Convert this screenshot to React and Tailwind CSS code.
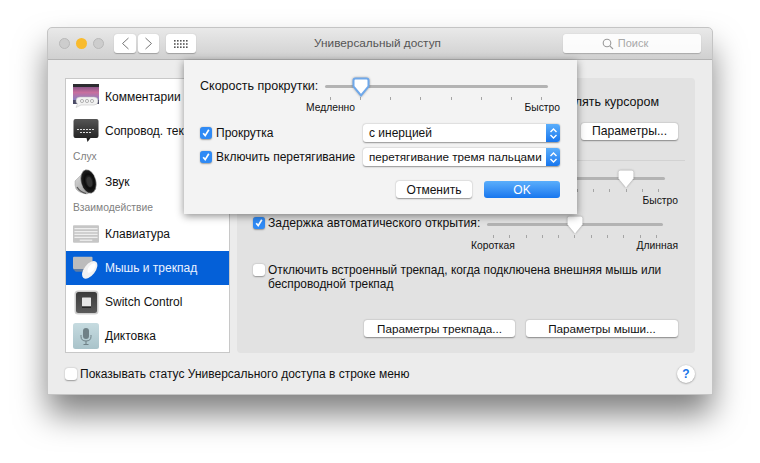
import React from "react";

const Check = ({ on }) => (
  <span className={"inline-flex shrink-0 w-3 h-3 rounded-[3px] items-center justify-center shadow-[0_0.5px_1.5px_rgba(0,0,0,0.35)] " + (on ? "bg-[#2f8af5]" : "bg-white")}>
    {on && (
      <svg width="10" height="10" viewBox="0 0 10 10" fill="none" stroke="white" strokeWidth="1.7">
        <path d="M2.2 5.2 L4.2 7.6 L7.8 1.8" />
      </svg>
    )}
  </span>
);

const Btn = ({ className = "", children }) => (
  <div className={"flex items-center justify-center h-[17px] rounded-[3px] bg-white shadow-[0_0.5px_1.5px_rgba(0,0,0,0.4)] text-[#111] " + className}>{children}</div>
);

const Thumb = ({ blue }) => (
  <svg width="18" height="20" viewBox="0 0 18 20" className="drop-shadow-[0_0.5px_1px_rgba(0,0,0,0.35)]">
    <path d="M3.5 1.5 H14.5 Q16.5 1.5 16.5 3.5 V9.5 L9 18.5 L1.5 9.5 V3.5 Q1.5 1.5 3.5 1.5 Z" fill="white" stroke={blue ? "#6fa8ea" : "none"} strokeWidth={blue ? 2 : 0} />
  </svg>
);

const Ticks = ({ n, className = "" }) => (
  <div className={"absolute top-[20px] flex justify-between " + className}>
    {Array.from({ length: n }).map((_, i) => (
      <span key={i} className="w-px h-[3px] bg-[#a5a5a5]" />
    ))}
  </div>
);

const Slider = ({ className, thumbClass, blue, ticks, tickClass }) => (
  <div className={"relative h-[30px] " + className}>
    <div className="absolute left-0 right-0 top-[8px] h-[3px] rounded-full bg-[#b3b3b3]" />
    <Ticks n={ticks} className={tickClass} />
    <div className={"absolute top-0 " + thumbClass}><Thumb blue={blue} /></div>
  </div>
);

const IconComments = () => (
  <svg width="26" height="26" viewBox="0 0 26 26">
    <defs>
      <linearGradient id="cg" x1="0" y1="0" x2="0" y2="1">
        <stop offset="0" stopColor="#6e4a7e" /><stop offset="0.5" stopColor="#c86f9e" /><stop offset="1" stopColor="#7e83c8" />
      </linearGradient>
    </defs>
    <rect x="0" y="0" width="26" height="17" fill="url(#cg)" />
    <rect x="0" y="0" width="26" height="3" fill="#2c2c30" />
    <rect x="0" y="16" width="26" height="4" fill="#4a4a66" />
    <path d="M7 13 H21 Q25 13 25 17 Q25 21 21 21 H8 L3 23.5 L4.5 20 Q3 19 3 17 Q3 13 7 13 Z" fill="#f2f2f2" stroke="#bbb" strokeWidth="0.5" />
    <circle cx="9" cy="17" r="1.6" fill="none" stroke="#999" strokeWidth="0.7" />
    <circle cx="14" cy="17" r="1.6" fill="none" stroke="#999" strokeWidth="0.7" />
    <circle cx="19" cy="17" r="1.6" fill="none" stroke="#999" strokeWidth="0.7" />
  </svg>
);

const IconCaption = () => (
  <svg width="26" height="26" viewBox="0 0 26 26">
    <defs>
      <linearGradient id="sg" x1="0" y1="0" x2="0" y2="1">
        <stop offset="0" stopColor="#555" /><stop offset="1" stopColor="#1b1b1b" />
      </linearGradient>
    </defs>
    <path d="M2.5 1 H23.5 Q25.5 1 25.5 3 V18 Q25.5 20 23.5 20 H17.5 L14.5 24 L13.5 20 H2.5 Q0.5 20 0.5 18 V3 Q0.5 1 2.5 1 Z" fill="url(#sg)" />
    <path d="M4 11.5 H22 M7 14.5 H19" stroke="#ddd" strokeWidth="1" strokeDasharray="2 1" />
  </svg>
);

const IconSound = () => (
  <svg width="24" height="26" viewBox="0 0 24 26">
    <defs>
      <radialGradient id="spk" cx="0.55" cy="0.5" r="0.6">
        <stop offset="0" stopColor="#4a4a4a" /><stop offset="0.5" stopColor="#0c0c0c" /><stop offset="1" stopColor="#2a2a2a" />
      </radialGradient>
      <linearGradient id="spb" x1="0" y1="0" x2="1" y2="1">
        <stop offset="0" stopColor="#e4e4e4" /><stop offset="1" stopColor="#8c8c8c" />
      </linearGradient>
    </defs>
    <path d="M1 12 L12 1 L22 20 L13 25 Q5 24 2 20 Q0.5 16 1 12 Z" fill="url(#spb)" stroke="#8a8a8a" strokeWidth="0.4" />
    <ellipse cx="14.5" cy="12.5" rx="7.5" ry="12" transform="rotate(-14 14.5 12.5)" fill="url(#spk)" stroke="#bbb" strokeWidth="0.5" />
    <ellipse cx="15.5" cy="13" rx="2.6" ry="5" transform="rotate(-14 15.5 13)" fill="#353535" />
    <path d="M3 18 Q6 23 12 24.5" stroke="#555" strokeWidth="1.2" fill="none" />
  </svg>
);

const IconKeyboard = () => (
  <svg width="27" height="18" viewBox="0 0 27 18">
    <rect x="0" y="0" width="27" height="18" rx="1" fill="#c6c6c6" />
    <path d="M1.5 3.5 H25.5 M1.5 6.5 H25.5 M1.5 9.5 H25.5 M1.5 12.5 H25.5" stroke="#eeeeee" strokeWidth="1.3" />
    <path d="M7 15.5 H20" stroke="#eeeeee" strokeWidth="1.3" />
  </svg>
);

const IconMouse = () => (
  <svg width="28" height="24" viewBox="0 0 28 24">
    <rect x="0" y="0" width="21" height="13" rx="1" fill="#bcbcbc" />
    <path d="M0 13 H15 L10 16 H3 Z" fill="#8a8a8a" opacity="0.7" />
    <ellipse cx="18" cy="14" rx="6" ry="11" transform="rotate(38 18 14)" fill="#f2f2f2" />
    <ellipse cx="20" cy="12" rx="3" ry="6" transform="rotate(38 20 12)" fill="#ffffff" />
  </svg>
);

const IconSwitch = () => (
  <svg width="25" height="25" viewBox="0 0 25 25">
    <defs>
      <linearGradient id="swg" x1="0" y1="0" x2="0" y2="1">
        <stop offset="0" stopColor="#3c3c3c" /><stop offset="1" stopColor="#5a5a5a" />
      </linearGradient>
    </defs>
    <rect x="0.5" y="0.5" width="24" height="24" rx="3.5" fill="#cfcfcf" />
    <rect x="2" y="2" width="21" height="21" rx="2.5" fill="url(#swg)" />
    <rect x="8" y="7.5" width="9" height="9" rx="0.5" fill="#e6e6e6" />
    <rect x="8" y="16.5" width="9" height="1.4" fill="#222" />
  </svg>
);

const IconDictation = () => (
  <svg width="26" height="26" viewBox="0 0 26 26">
    <defs>
      <linearGradient id="dg" x1="0" y1="0" x2="0" y2="1">
        <stop offset="0" stopColor="#c6dbe0" /><stop offset="1" stopColor="#a9c3ca" />
      </linearGradient>
    </defs>
    <rect x="0" y="0" width="26" height="26" rx="2.5" fill="url(#dg)" />
    <rect x="10" y="5" width="6" height="11" rx="3" fill="#6f8187" />
    <path d="M8 12 V13.5 Q8 18 13 18 Q18 18 18 13.5 V12" fill="none" stroke="#6f8187" strokeWidth="1" />
    <path d="M13 18 V21 M10.5 21.5 H15.5" stroke="#6f8187" strokeWidth="1.1" />
  </svg>
);

const Row = ({ icon, label, active }) => (
  <div className={"flex items-center h-[34px] pl-[7px] " + (active ? "bg-[#0460d8] text-[#eaf2ff]" : "text-[#111]")}>
    <div className="w-[26px] flex justify-center shrink-0">{icon}</div>
    <span className="ml-[6px] text-[12px] whitespace-nowrap">{label}</span>
  </div>
);

const Section = ({ label, className = "" }) => (
  <div className={"pl-[7px] text-[10.3px] text-[#808080] flex items-center " + className}>{label}</div>
);

function Stepper() {
  return (
    <div className="w-[14px] h-full shrink-0 bg-gradient-to-b from-[#5aaefb] to-[#1676ee] flex items-center justify-center">
      <svg width="9" height="13" viewBox="0 0 9 13" fill="none" stroke="white" strokeWidth="1.4"><path d="M1.5 5 L4.5 2 L7.5 5 M1.5 8 L4.5 11 L7.5 8" /></svg>
    </div>
  );
}

export default function App() {
  return (
    <div className="w-[760px] h-[463px] bg-white pt-[28px] pl-[48px] overflow-hidden font-['Liberation_Sans','Noto_Sans',sans-serif]">
      <div className="relative w-[664px] h-[366px] bg-[#ececec] rounded-t-[4px] outline outline-[#c4c4c4] shadow-[0_20px_32px_rgba(0,0,0,0.5)]">
        {/* title bar */}
        <div className="h-[32px] flex items-center pl-[11px] pr-[11px] rounded-t-[4px] bg-gradient-to-b from-[#e9e9e9] to-[#d0d0d0] border-b border-[#b4b4b4]">
          <div className="flex gap-[6px]">
            <span className="w-[11px] h-[11px] rounded-full bg-[#cdcdcd] border border-[#b9b9b9]" />
            <span className="w-[11px] h-[11px] rounded-full bg-[#f9bb2d]" />
            <span className="w-[11px] h-[11px] rounded-full bg-[#cdcdcd] border border-[#b9b9b9]" />
          </div>
          <div className="ml-[10px] flex gap-[2px]">
            <div className="w-[22px] h-[19px] bg-white rounded-[3px] shadow-[0_0.5px_1px_rgba(0,0,0,0.25)] flex items-center justify-center">
              <svg width="9" height="13" viewBox="0 0 9 13" fill="none" stroke="#777" strokeWidth="1"><path d="M7.5 1 L1.5 6.5 L7.5 12" /></svg>
            </div>
            <div className="w-[21px] h-[19px] bg-white rounded-[3px] shadow-[0_0.5px_1px_rgba(0,0,0,0.25)] flex items-center justify-center">
              <svg width="9" height="13" viewBox="0 0 9 13" fill="none" stroke="#777" strokeWidth="1"><path d="M1.5 1 L7.5 6.5 L1.5 12" /></svg>
            </div>
          </div>
          <div className="ml-[7px] w-[30px] h-[19px] bg-white rounded-[3px] shadow-[0_0.5px_1px_rgba(0,0,0,0.25)] flex items-center justify-center">
            <svg width="14" height="10" viewBox="0 0 14 10" fill="#555">
              {[0, 1, 2].map((r) => [0, 1, 2, 3, 4].map((c) => <rect key={r + "-" + c} x={c * 3} y={r * 3.2 + 1} width="1.6" height="1.6" />))}
            </svg>
          </div>
          <div className="flex-1 text-center text-[11.8px] text-[#555] pr-[4px]">Универсальный доступ</div>
          <div className="w-[138px] h-[19px] bg-white/90 rounded-[3px] shadow-[0_0.5px_1px_rgba(0,0,0,0.2)] flex items-center justify-center gap-[4px] pr-[14px] text-[11px] text-[#a8a8a8]">
            <svg width="12" height="12" viewBox="0 0 12 12" fill="none" stroke="#9a9a9a" strokeWidth="1.1"><circle cx="5" cy="5" r="3.8" /><path d="M7.8 7.8 L11 11" /></svg>
            <span>Поиск</span>
          </div>
        </div>

        {/* body */}
        <div className="flex gap-[7px] pt-[18px] pl-[17px] pr-[17px]">
          <div className="w-[165px] h-[275px] bg-white border border-[#c8c8c8] overflow-hidden shrink-0 pt-px">
            <Row icon={<IconComments />} label="Комментарии" />
            <Row icon={<IconCaption />} label="Сопровод. текст" />
            <Section label="Слух" className="h-[17px]" />
            <Row icon={<IconSound />} label="Звук" />
            <Section label="Взаимодействие" className="h-[18px]" />
            <Row icon={<IconKeyboard />} label="Клавиатура" />
            <Row icon={<IconMouse />} label="Мышь и трекпад" active />
            <Row icon={<IconSwitch />} label="Switch Control" />
            <Row icon={<IconDictation />} label="Диктовка" />
          </div>

          <div className="flex-1 h-[275px] bg-[#e2e2e2] rounded-[4px] pl-[16px] pr-[17px] text-[12.2px] text-[#111] flex flex-col">
            <div className="mt-[16px] h-[16px] flex justify-end items-center pr-[19px] whitespace-nowrap text-[12.5px]">лять курсором</div>
            <div className="mt-[13px] flex justify-end"><Btn className="w-[97px] text-[12.2px]">Параметры...</Btn></div>
            <div className="mt-[20px] ml-[324px] mr-[-7px] h-px bg-[#d2d2d2]" />
            <div className="mt-[8px] flex justify-end pr-[13px]">
              <Slider className="w-[90px]" thumbClass="left-[42px]" ticks={6} tickClass="left-[2px] right-[6px]" />
            </div>
            <div className="-mt-[5px] flex justify-end text-[10.3px] h-[14px] items-center">Быстро</div>
            <div className="mt-[7px] flex items-center h-[16px] gap-[3px]">
              <Check on />
              <span className="whitespace-nowrap">Задержка автоматического открытия:</span>
            </div>
            <div className="-mt-[16px] flex justify-end pr-[15px] h-[30px]">
              <Slider className="w-[176px]" thumbClass="left-[79px]" ticks={11} tickClass="left-[6px] right-[6px]" />
            </div>
            <div className="flex justify-between text-[10.3px] h-[14px] items-center pl-[218px] -mt-[6px]">
              <span>Короткая</span>
              <span>Длинная</span>
            </div>
            <div className="mt-[10px] flex items-start gap-[3px] leading-[14px] text-[11.9px]">
              <span className="mt-px"><Check /></span>
              <span className="w-[410px]">Отключить встроенный трекпад, когда подключена внешняя мышь или беспроводной трекпад</span>
            </div>
            <div className="mt-[29px] flex justify-end gap-[11px]">
              <Btn className="w-[151px] text-[11.7px]">Параметры трекпада...</Btn>
              <Btn className="w-[152px] text-[11.7px]">Параметры мыши...</Btn>
            </div>
          </div>
        </div>

        {/* bottom row */}
        <div className="mt-[12px] pl-[17px] pr-[17px] flex items-center justify-between">
          <div className="flex items-center gap-[3px] text-[12px] text-[#111]">
            <Check />
            <span>Показывать статус Универсального доступа в строке меню</span>
          </div>
          <div className="w-[18px] h-[18px] rounded-full bg-white shadow-[0_0.5px_2px_rgba(0,0,0,0.4)] flex items-center justify-center text-[12px] font-bold text-[#1a74e8]">?</div>
        </div>

        {/* sheet */}
        <div className="absolute left-[136px] top-[32px] w-[393px] h-[154px] bg-[#f3f3f3] shadow-[0_2px_8px_rgba(0,0,0,0.45)] pl-[16px] pr-[17px] text-[12px] text-[#111] flex flex-col">
          <div className="mt-[17px] flex items-start">
            <span className="whitespace-nowrap h-[19px] flex items-center text-[12.5px]">Скорость прокрутки:</span>
            <div className="ml-auto mr-[12px]">
              <Slider className="w-[223px]" thumbClass="left-[27px]" blue ticks={8} tickClass="left-[5px] right-[6px]" />
            </div>
          </div>
          <div className="-mt-[6px] flex justify-between text-[10.3px] h-[14px] items-center pl-[106px]">
            <span>Медленно</span>
            <span>Быстро</span>
          </div>
          <div className="mt-[9px] flex items-center h-[18px]">
            <Check on />
            <span className="ml-[4px]">Прокрутка</span>
            <div className="ml-auto w-[197px] h-[18px] rounded-[3px] bg-white shadow-[0_0.5px_1.5px_rgba(0,0,0,0.4)] flex items-center overflow-hidden">
              <span className="flex-1 min-w-0 pl-[6px]">с инерцией</span>
              <Stepper />
            </div>
          </div>
          <div className="mt-[6px] flex items-center h-[18px]">
            <Check on />
            <span className="ml-[4px]">Включить перетягивание</span>
            <div className="ml-auto w-[197px] h-[18px] rounded-[3px] bg-white shadow-[0_0.5px_1.5px_rgba(0,0,0,0.4)] flex items-center overflow-hidden">
              <span className="flex-1 min-w-0 pl-[6px] whitespace-nowrap text-[11.7px]">перетягивание тремя пальцами</span>
              <Stepper />
            </div>
          </div>
          <div className="mt-[15px] flex justify-end gap-[12px]">
            <Btn className="w-[76px] text-[12px]">Отменить</Btn>
            <div className="w-[76px] h-[17px] rounded-[3px] bg-gradient-to-b from-[#5aaefb] to-[#1676ee] text-white flex items-center justify-center">OK</div>
          </div>
        </div>
      </div>
    </div>
  );
}
